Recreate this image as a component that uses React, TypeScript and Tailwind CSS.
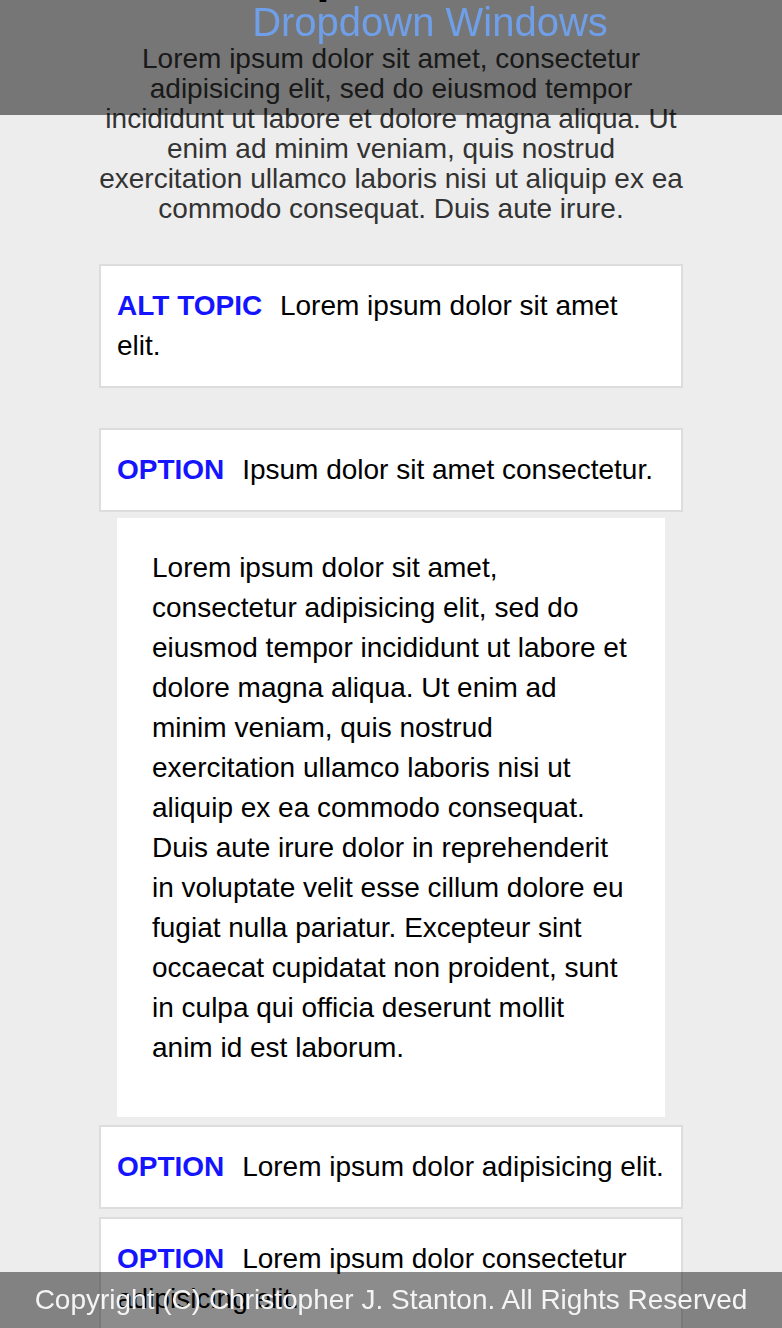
const cards = [
  { label: "OPTION", text: "Lorem ipsum dolor adipisicing elit." },
  { label: "OPTION", text: "Lorem ipsum dolor consectetur adipisicing elit." },
];

const Card = ({ label, text, className = "" }: { label: string; text: string; className?: string }) => (
  <div className={`border-2 border-[#dddddd] bg-white px-4 py-5 text-[28px] leading-[40px] text-black ${className}`}>
    <span className="mr-[10px] font-bold text-[#1414ff]">{label}</span> {text}
  </div>
);

export default function App() {
  return (
    <div className="min-h-screen bg-[#ededed] font-['Liberation_Sans',Arial,sans-serif]">
      <header className="fixed inset-x-0 top-0 z-10 h-[115px] bg-black/50">
        <h2 className="pl-[78px] pt-[2px] text-center text-[40px] leading-none text-[#6f9fe8]">
          Dropdown Windows
        </h2>
      </header>

      <main className="mx-auto w-[584px] pb-24">
        <h1 className="mt-[-48px] h-[48px] pl-[88px] text-center text-[48px] font-bold leading-none text-black">
          Dropdown Menus
        </h1>
        <p className="mt-[44px] text-center text-[28px] leading-[30px] text-[#333333]">
          Lorem ipsum dolor sit amet, consectetur adipisicing elit, sed do eiusmod tempor incididunt ut labore et
          dolore magna aliqua. Ut enim ad minim veniam, quis nostrud exercitation ullamco laboris nisi ut aliquip ex
          ea commodo consequat. Duis aute irure.
        </p>

        <Card className="mt-10" label="ALT TOPIC" text="Lorem ipsum dolor sit amet elit." />
        <Card className="mt-10" label="OPTION" text="Ipsum dolor sit amet consectetur." />

        <div className="mx-[18px] mt-[6px] bg-white px-[35px] pb-[49px] pt-[30px] text-[28px] leading-[40px] text-black">
          Lorem ipsum dolor sit amet, consectetur adipisicing elit, sed do eiusmod tempor incididunt ut labore et
          dolore magna aliqua. Ut enim ad minim veniam, quis nostrud exercitation ullamco laboris nisi ut aliquip ex
          ea commodo consequat. Duis aute irure dolor in reprehenderit in voluptate velit esse cillum dolore eu
          fugiat nulla pariatur. Excepteur sint occaecat cupidatat non proident, sunt in culpa qui officia deserunt
          mollit anim id est laborum.
        </div>

        {cards.map((c, i) => (
          <Card key={i} className="mt-2" label={c.label} text={c.text} />
        ))}
      </main>

      <footer className="fixed inset-x-0 bottom-0 z-10 flex h-[56px] items-center justify-center bg-black/45 text-[28px] text-[#f4f4f4]">
        Copyright (C) Christopher J. Stanton. All Rights Reserved
      </footer>
    </div>
  );
}
